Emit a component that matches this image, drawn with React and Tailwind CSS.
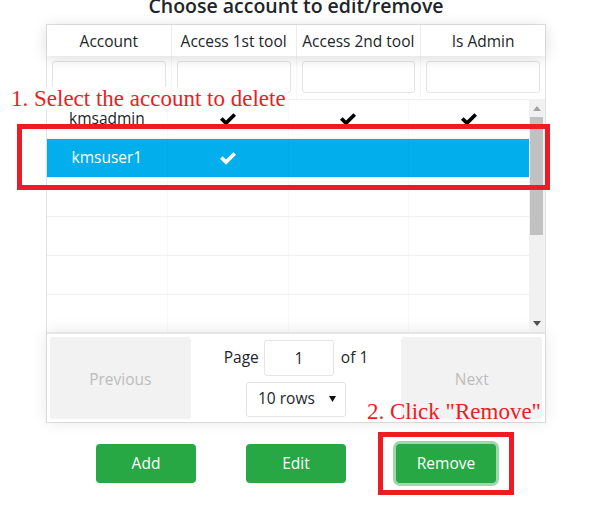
import React from 'react';

const FONT = { fontFamily: '"Open Sans", "Noto Sans", Arial, sans-serif' };

function Check({ white }) {
  return (
    <svg width="16" height="13" viewBox="0 0 16 13" className={white ? 'fill-white' : 'fill-black'}>
      <polygon points="0,6.8 2.6,4.2 6,7.6 13.4,0.2 16,2.8 6,12.8" />
    </svg>
  );
}

const rows = [
  { name: 'kmsadmin', t1: true, t2: true, admin: true },
  { name: 'kmsuser1', t1: true, t2: false, admin: false, selected: true },
  {}, {}, {}, {},
];

function Scrollbar() {
  return (
    <div className="w-[16px] bg-[#f1f1f1] flex flex-col">
      <div className="h-[17px] flex items-center justify-center">
        <svg width="8" height="5" viewBox="0 0 8 5"><polygon points="0,5 4,0 8,5" fill="#a3a3a3" /></svg>
      </div>
      <div className="h-[118px] ml-[1px] mr-[2px] bg-[#c1c1c1]" />
      <div className="flex-1" />
      <div className="h-[17px] flex items-center justify-center">
        <svg width="8" height="5" viewBox="0 0 8 5"><polygon points="0,0 8,0 4,5" fill="#505050" /></svg>
      </div>
    </div>
  );
}

export default function App() {
  const headers = ['Account', 'Access 1st tool', 'Access 2nd tool', 'Is Admin'];

  return (
    <div className="relative w-[594px] h-[505px] overflow-hidden bg-white text-[#212529]" style={FONT}>
      {/* title, its top is cut off in the screenshot */}
      <h5 className="-mt-[4px] mb-[8px] leading-[20px] text-[19.5px] font-semibold text-center pr-[2px]">
        Choose account to edit/remove
      </h5>

      <div className="ml-[46px] w-[500px] border border-[#e3e3e3]">
        {/* header */}
        <div className="relative z-10 flex h-[31px] bg-white shadow-[0_2px_15px_0_rgba(0,0,0,0.15)]">
          {headers.map((h, i) => (
            <div
              key={h}
              className={`flex-1 flex items-center justify-center text-[15.5px] pt-[2px] ${i < 3 ? 'border-r border-[#ececec]' : ''}`}
            >
              {h}
            </div>
          ))}
        </div>

        {/* filters */}
        <div className="flex h-[44px] border-b border-[#f0f0f0]">
          {headers.map((h, i) => (
            <div key={h} className={`flex-1 px-[5px] pt-[5px] ${i < 3 ? 'border-r border-[#f7f7f7]' : ''}`}>
              <input className="w-full h-[32px] border border-[#e5e5e5] rounded-[3px] outline-none" />
            </div>
          ))}
        </div>

        {/* body */}
        <div className="flex h-[232px]">
          <div className="flex-1 overflow-hidden">
            {rows.map((r, i) => (
              <div
                key={i}
                className={`flex h-[39px] border-b border-[#f0f0f0] text-[15.5px] ${r.selected ? 'bg-[#02aeeb] text-white' : ''}`}
              >
                <div className="flex-1 flex items-center justify-center border-r border-[rgba(0,0,0,0.025)]">{r.name}</div>
                <div className="flex-1 flex items-center justify-center border-r border-[rgba(0,0,0,0.025)]">
                  {r.t1 && <Check white={r.selected} />}
                </div>
                <div className="flex-1 flex items-center justify-center border-r border-[rgba(0,0,0,0.025)]">
                  {r.t2 && <Check white={r.selected} />}
                </div>
                <div className="flex-1 flex items-center justify-center">
                  {r.admin && <Check white={r.selected} />}
                </div>
              </div>
            ))}
          </div>
          <Scrollbar />
        </div>

        {/* pagination */}
        <div className="flex h-[90px] p-[3px] border-t-2 border-[#e5e5e5] shadow-[0_0_15px_0_rgba(0,0,0,0.1)]">
          <button className="flex-1 rounded-[3px] bg-[#f2f2f2] text-[#bdbdbd] text-[15.5px] pt-[4px]">Previous</button>
          <div className="flex-[1.5] flex flex-col items-center justify-center gap-[6px] text-[15.5px]">
            <div className="flex items-center gap-[5px]">
              <span>Page</span>
              <input
                defaultValue="1"
                className="w-[70px] h-[36px] border border-[#e5e5e5] rounded-[3px] text-center outline-none"
              />
              <span className="ml-[2px]">of 1</span>
            </div>
            <div className="relative w-[100px] h-[35px] border border-[#e5e5e5] rounded-[3px] flex items-center pl-[11px]">
              <span>10 rows</span>
              <svg width="7" height="6" viewBox="0 0 7 6" className="absolute right-[9px] top-[13px]">
                <polygon points="0,0 7,0 3.5,6" fill="#111" />
              </svg>
            </div>
          </div>
          <button className="flex-1 rounded-[3px] bg-[#f2f2f2] text-[#bdbdbd] text-[15.5px] pt-[4px]">Next</button>
        </div>
      </div>

      {/* action buttons */}
      <div className="ml-[46px] w-[500px] mt-[21px] flex justify-center gap-[50px]">
        <button className="w-[100px] h-[39px] rounded-[4px] bg-[#28a745] text-white text-[15.5px]">Add</button>
        <button className="w-[100px] h-[39px] rounded-[4px] bg-[#28a745] text-white text-[15.5px]">Edit</button>
        <button className="w-[100px] h-[39px] rounded-[4px] bg-[#28a745] text-white text-[15.5px] shadow-[0_0_0_3px_rgba(40,167,69,0.45)]">
          Remove
        </button>
      </div>

      {/* annotations */}
      <div
        className="absolute left-[11px] top-[87px] leading-[23px] text-[23px] text-[#ed1c24] bg-white pr-[2px]"
        style={{ fontFamily: '"Liberation Serif", "Times New Roman", serif' }}
      >
        1. Select the account to delete
      </div>
      <div className="absolute left-[17px] top-[124px] w-[533px] h-[66px] border-[5px] border-[#ed1c24]" />

      <div
        className="absolute left-[367px] top-[400px] leading-[23px] text-[23px] text-[#ed1c24]"
        style={{ fontFamily: '"Liberation Serif", "Times New Roman", serif' }}
      >
        2. Click "Remove"
      </div>
      <div className="absolute left-[378px] top-[432px] w-[136px] h-[63px] border-[5px] border-[#ed1c24]" />
    </div>
  );
}
